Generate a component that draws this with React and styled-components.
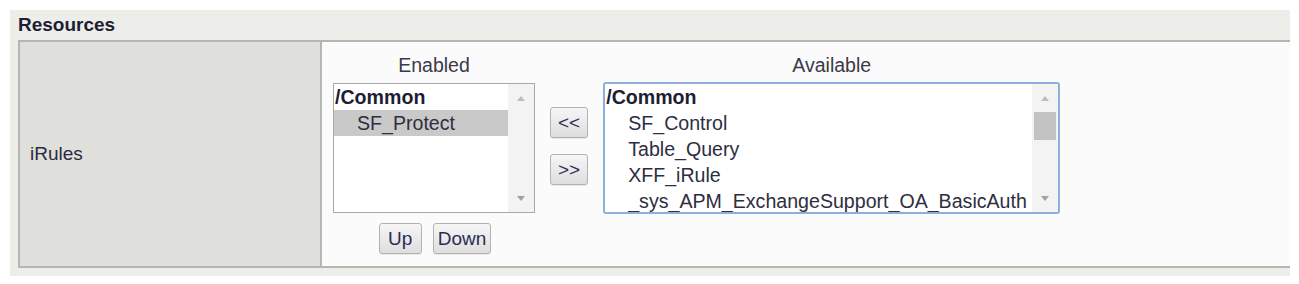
import React from "react";
import styled, { createGlobalStyle } from "styled-components";

const Global = createGlobalStyle`
  html, body { margin: 0; padding: 0; background: #ffffff; }
  body { font-family: "Liberation Sans", Arial, sans-serif; color: #262636; }
`;

const Panel = styled.section`
  margin: 10px 9px 0 10px;
  background: #ededea;
  padding: 0 0 8px 8px;
`;

const Header = styled.h2`
  margin: 0;
  height: 30px;
  line-height: 30px;
  font-size: 19px;
  font-weight: bold;
  color: #1d1d33;
`;

const Row = styled.div`
  display: grid;
  grid-template-columns: 302px 1fr;
  border-top: 2px solid #b6b6b2;
  border-bottom: 2px solid #b6b6b2;
  border-left: 2px solid #b6b6b2;
`;

const LabelCell = styled.div`
  background: #dfdfdb;
  border-right: 2px solid #b6b6b2;
  display: flex;
  align-items: center;
  padding-left: 10px;
  font-size: 19px;
  color: #2a2a40;
`;

const ContentCell = styled.div`
  background: #fbfbfb;
  padding: 10px 0 12px 11px;
  display: flex;
  align-items: flex-start;
`;

const Column = styled.div`
  display: flex;
  flex-direction: column;
  align-items: center;
  width: ${(p) => p.$width}px;
`;

const ColumnTitle = styled.div`
  font-size: 19.5px;
  line-height: 26px;
  height: 26px;
  color: #3a3a48;
`;

const ListBox = styled.div`
  box-sizing: border-box;
  width: 100%;
  margin-top: ${(p) => (p.$focused ? 4 : 5)}px;
  height: ${(p) => (p.$focused ? 132 : 130)}px;
  border: ${(p) => (p.$focused ? "2px solid #8eaedc" : "1px solid #a8a8a8")};
  border-radius: ${(p) => (p.$focused ? 3 : 0)}px;
  background: #ffffff;
  display: flex;
  overflow: hidden;
`;

const Options = styled.div`
  flex: 1;
  display: flex;
  flex-direction: column;
  font-size: 19.6px;
  overflow: hidden;
`;

const Group = styled.div`
  height: 26px;
  line-height: 26px;
  padding-left: 1px;
  font-weight: bold;
  color: #1d1d33;
  white-space: nowrap;
`;

const Option = styled.div`
  height: 26px;
  line-height: 26px;
  padding-left: 23px;
  white-space: nowrap;
  color: #2e2e40;
  background: ${(p) => (p.$selected ? "#c9c9c9" : "transparent")};
`;

const Track = styled.div`
  width: 26px;
  flex: none;
  background: #f3f3f3;
  display: flex;
  flex-direction: column;
  align-items: center;
`;

const ArrowBox = styled.div`
  height: 28px;
  width: 100%;
  display: flex;
  align-items: center;
  justify-content: center;
`;

const Triangle = styled.div`
  width: 0;
  height: 0;
  border-left: 4px solid transparent;
  border-right: 4px solid transparent;
  ${(p) =>
    p.$down
      ? "border-top: 5px solid #a2a2a2;"
      : "border-bottom: 5px solid #bdbdbd;"}
`;

const Thumb = styled.div`
  width: 22px;
  height: 28px;
  background: #c3c3c3;
`;

const Spacer = styled.div`
  flex: 1;
`;

const Mover = styled.div`
  display: flex;
  flex-direction: column;
  gap: 16px;
  margin: 55px 15px 0 15px;
`;

const Button = styled.button`
  box-sizing: border-box;
  height: 31px;
  min-width: ${(p) => p.$min || 0}px;
  padding: 0 ${(p) => p.$pad || 4}px;
  font-family: "Liberation Sans", Arial, sans-serif;
  font-size: 19px;
  color: #2c2c55;
  background: linear-gradient(#f6f6f6, #dedede);
  border: 1px solid #b2b2b2;
  border-radius: 3px;
  box-shadow: 0 1px 0 rgba(0, 0, 0, 0.08);
  cursor: pointer;
`;

const ButtonRow = styled.div`
  display: flex;
  gap: 11px;
  margin-top: 10px;
  margin-left: 2px;
`;

function Scrollbar({ thumb }) {
  return (
    <Track>
      <ArrowBox>
        <Triangle />
      </ArrowBox>
      {thumb && <Thumb />}
      <Spacer />
      <ArrowBox>
        <Triangle $down />
      </ArrowBox>
    </Track>
  );
}

export default function App() {
  return (
    <>
      <Global />
      <Panel>
        <Header>Resources</Header>
        <Row>
          <LabelCell>iRules</LabelCell>
          <ContentCell>
            <Column $width={202}>
              <ColumnTitle>Enabled</ColumnTitle>
              <ListBox>
                <Options>
                  <Group>/Common</Group>
                  <Option $selected>SF_Protect</Option>
                </Options>
                <Scrollbar />
              </ListBox>
              <ButtonRow>
                <Button $min={43}>Up</Button>
                <Button>Down</Button>
              </ButtonRow>
            </Column>
            <Mover>
              <Button $pad={7}>&lt;&lt;</Button>
              <Button $pad={7}>&gt;&gt;</Button>
            </Mover>
            <Column $width={457}>
              <ColumnTitle>Available</ColumnTitle>
              <ListBox $focused>
                <Options>
                  <Group>/Common</Group>
                  <Option>SF_Control</Option>
                  <Option>Table_Query</Option>
                  <Option>XFF_iRule</Option>
                  <Option>_sys_APM_ExchangeSupport_OA_BasicAuth</Option>
                </Options>
                <Scrollbar thumb />
              </ListBox>
            </Column>
          </ContentCell>
        </Row>
      </Panel>
    </>
  );
}
